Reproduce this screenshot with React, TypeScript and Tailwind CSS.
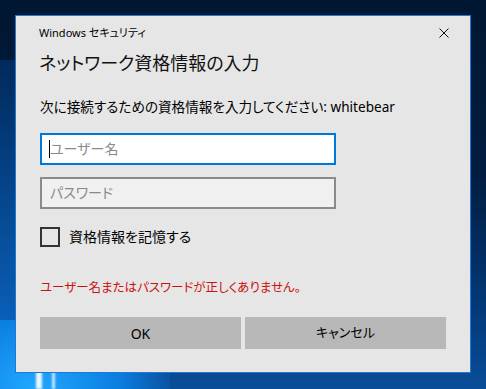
import { useState } from "react";

const font = {
  fontFamily: '"Noto Sans", "Noto Sans CJK JP", sans-serif',
  fontFeatureSettings: '"palt"',
};

const App = () => {
  const [remember, setRemember] = useState(false);

  return (
    <div
      className="relative w-[486px] h-[389px] overflow-hidden bg-[linear-gradient(180deg,#001731_0%,#011d40_45%,#033a7a_80%,#0a4d98_100%)]"
      style={font}
    >
      {/* Wallpaper light */}
      <div className="absolute left-0 bottom-0 w-[170px] h-[120px] bg-[radial-gradient(ellipse_at_20%_100%,#21a8ff_0%,#0b7de0_45%,transparent_75%)]" />
      <div className="absolute left-0 top-[60px] w-[16px] h-[260px] bg-[linear-gradient(180deg,#002a5c,#0a5fb8)]" />
      <div className="absolute left-[36px] bottom-0 w-[6px] h-[20px] bg-[#e9f6ff] blur-[1px]" />
      <div className="absolute left-[52px] bottom-0 w-[3px] h-[18px] bg-[#cde9ff] blur-[1px]" />

      {/* Dialog */}
      <div className="relative ml-[15px] mt-[15px] w-[456px] h-[358px] bg-[#e6e6e6] border border-[#1a7ad4] flex flex-col pl-[24px] pr-[24px]">
        <div className="flex items-center justify-between h-[16px] mt-[9px] ml-[-1px]">
          <span className="text-[11px] leading-[16px] text-[#000]">Windows セキュリティ</span>
          <svg width="10" height="10" viewBox="0 0 10 10" className="mr-[-3px]">
            <path d="M0.5 0.5 L9.5 9.5 M9.5 0.5 L0.5 9.5" stroke="#111" strokeWidth="1" fill="none" />
          </svg>
        </div>

        <h1 className="mt-[8px] ml-[-1px] text-[18px] leading-[28px] text-[#111]">
          ネットワーク資格情報の入力
        </h1>

        <p className="mt-[20px] text-[13.6px] leading-[20px] text-[#000]">
          次に接続するための資格情報を入力してください: whitebear
        </p>

        <div className="mt-[16px] w-[296px] h-[32px] bg-white border-2 border-[#0078d7] flex items-center pl-[7px]">
          <span className="w-px h-[18px] bg-black" />
          <span className="text-[14px] text-[#8a8a8a] leading-[20px]">ユーザー名</span>
        </div>

        <div className="mt-[12px] w-[296px] h-[32px] bg-[#f0f0f0] border-2 border-[#8a8a8a] flex items-center pl-[8px]">
          <span className="text-[14px] text-[#8a8a8a] leading-[20px]">パスワード</span>
        </div>

        <label className="mt-[18px] flex items-center gap-[9px] cursor-default">
          <button
            type="button"
            onClick={() => setRemember(!remember)}
            className="w-[20px] h-[20px] border-2 border-[#333] bg-transparent"
          />
          <span className="text-[14px] leading-[20px] text-[#000]">資格情報を記憶する</span>
        </label>

        <p className="mt-[31px] text-[12.5px] leading-[20px] text-[#cc1010]">
          ユーザー名またはパスワードが正しくありません。
        </p>

        <div className="mt-[19px] grid grid-cols-2 gap-[4px] w-[406px]">
          <button className="h-[32px] bg-[#b8b8b8] text-[14px] text-[#000]">OK</button>
          <button className="h-[32px] bg-[#b8b8b8] text-[13px] text-[#000]">キャンセル</button>
        </div>
      </div>
    </div>
  );
};

export default App;
